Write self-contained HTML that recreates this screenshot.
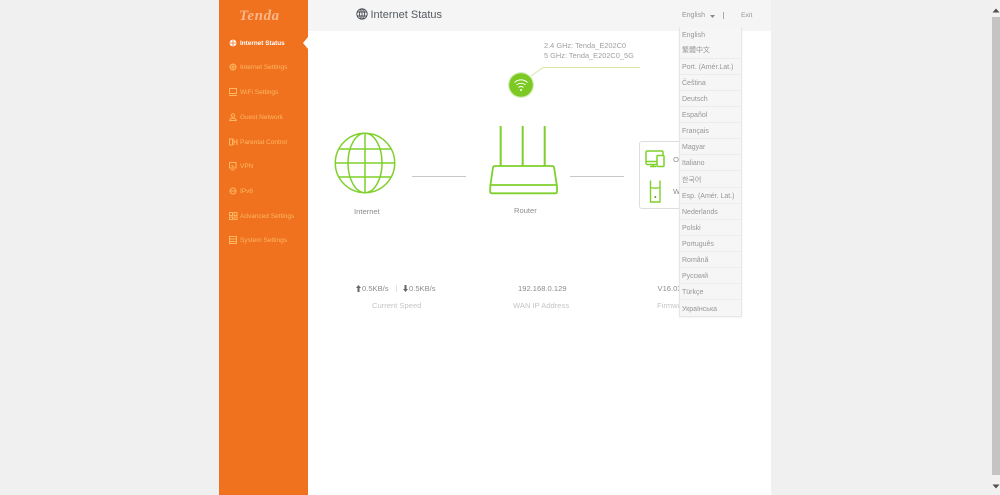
<!DOCTYPE html>
<html lang="en"><head><meta charset="utf-8"><title>Internet Status</title>
<style>
html,body{margin:0;padding:0;width:1000px;height:495px;overflow:hidden;background:#f0f0f0;font-family:"Liberation Sans","Noto Sans CJK SC",sans-serif}
div,span{position:absolute;white-space:nowrap}
svg{position:absolute;overflow:visible}
.side{left:219px;top:0;width:89px;height:495px;background:#f0711e}
.white{left:308px;top:0;width:463px;height:495px;background:#fff}
.head{left:308px;top:0;width:463px;height:31px;background:#f5f5f5}
.m{left:240px;font-size:6.5px;line-height:10px;color:#fdb863}
.g{color:#8c8c8c;font-size:7.6px;line-height:10px}
.l{color:#c4c4c4;font-size:7.6px;line-height:10px}
.menu{left:679px;top:27px;width:61px;height:289px;background:#f6f6f6;border:1px solid #e6e6e6;border-top:0;box-shadow:0 1px 2px rgba(0,0,0,.05)}
.r{left:2px;margin-top:1px;font-size:7px;line-height:10px;color:#969696}
.s{left:0;width:61px;height:1px;background:#ececec}
.ic{stroke:#fdb863;fill:none;stroke-width:1}
.gr{stroke:#7fd02c;fill:none}
</style></head><body>
<div class="white"></div>
<div class="head"></div>
<div class="side"></div>
<div style="left:239px;top:8px;font:italic bold 15px 'Liberation Serif',serif;line-height:16px;color:#f9b78a;letter-spacing:.6px">Tenda</div>

<svg style="left:303px;top:37px" width="6" height="12"><path d="M5 0L0 6l5 6z" fill="#fff"/></svg>
<svg style="left:229px;top:39px" width="8" height="8"><circle cx="4" cy="4" r="3.4" fill="#fff"/><path d="M1 4h6M4 1v6" stroke="#f0711e" stroke-width=".8"/></svg>
<div class="m" style="top:38.5px;color:#fff;font-weight:bold;left:240px;font-size:6.4px">Internet Status</div>

<svg style="left:229px;top:63px" width="8" height="8"><circle class="ic" cx="4" cy="4" r="3"/><path class="ic" d="M4 1v6M1 4h6"/></svg>
<div class="m" style="top:63px">Internet Settings</div>
<svg style="left:229px;top:88px" width="9" height="8"><rect class="ic" x=".5" y=".5" width="7" height="5"/><path class="ic" d="M0 7.5h8"/></svg>
<div class="m" style="top:88px">WiFi Settings</div>
<svg style="left:229px;top:113px" width="8" height="8"><circle class="ic" cx="4" cy="2.5" r="1.7"/><path class="ic" d="M.7 7.5c.5-3 6-3 6.6 0z"/></svg>
<div class="m" style="top:113px">Guest Network</div>
<svg style="left:229px;top:138px" width="9" height="8"><path class="ic" d="M.5 1h3v6h-3zM5 1v6M5 4h3M8 1v6"/></svg>
<div class="m" style="top:137.5px">Parental Control</div>
<svg style="left:229px;top:162px" width="8" height="9"><rect class="ic" x=".5" y=".5" width="6.5" height="5.5"/><path class="ic" d="M2 8h3.5M2.500 3l2 2"/></svg>
<div class="m" style="top:162px">VPN</div>
<svg style="left:229px;top:187px" width="8" height="8"><circle class="ic" cx="4" cy="4" r="3"/><path class="ic" d="M1 4h6"/></svg>
<div class="m" style="top:186.500px">IPv6</div>
<svg style="left:229px;top:212px" width="9" height="8"><path class="ic" d="M.5.500h3v3h-3zM5 .5h3v3H5zM.5 5h3v2.500h-3zM5 5h3v2.500H5z"/></svg>
<div class="m" style="top:211.500px">Advanced Settings</div>
<svg style="left:229px;top:236px" width="9" height="9"><rect class="ic" x=".5" y=".5" width="7" height="7"/><path class="ic" d="M.5 3h7M.5 5.500h7"/></svg>
<div class="m" style="top:236px">System Settings</div>

<svg style="left:356px;top:8px" width="12" height="12" viewBox="0 0 12 12"><g fill="none" stroke="#4a4f55" stroke-width=".9"><circle cx="6" cy="6" r="5.2"/><ellipse cx="6" cy="6" rx="2.500" ry="5.200"/><path d="M6 .8v10.400M1.200 4h9.600M1.200 8h9.600"/></g></svg>
<div style="left:370.500px;top:8px;font-size:11px;line-height:14px;color:#555a60">Internet Status</div>
<div style="left:682px;top:11px;font-size:7px;line-height:10px;color:#969696">English</div>
<svg style="left:710px;top:15px" width="5" height="3"><path d="M0 0h5L2.500 3z" fill="#8a8a8a"/></svg>
<div style="left:723px;top:12px;width:1px;height:7px;background:#aaa"></div>
<div style="left:741px;top:11px;font-size:6.8px;line-height:10px;color:#969696">Exit</div>

<div class="g" style="left:544px;top:40.500px;color:#a0a0a0;font-size:7.4px">2.4 GHz: Tenda_E202C0</div>
<div class="g" style="left:544px;top:51px;color:#a0a0a0;font-size:7.4px">5 GHz: Tenda_E202C0_5G</div>
<svg style="left:528px;top:67px" width="112" height="12"><path d="M3 9L15 .5H112" fill="none" stroke="#d7e6a0" stroke-width="1"/></svg>
<svg style="left:508px;top:72px" width="26" height="26" viewBox="0 0 26 26"><circle cx="13" cy="13" r="13" fill="#d5edb8"/><circle cx="13" cy="13" r="11.800" fill="#7cc924"/><g fill="none" stroke="#fff" stroke-width=".9"><path d="M6.500 10.500c4-3.500 9-3.500 13 0M8.500 13c2.500-2.300 6.500-2.300 9 0M10.500 15.500c1.500-1.200 3.500-1.200 5 0"/></g><circle cx="13" cy="18" r="1" fill="#fff"/></svg>

<svg style="left:334px;top:132px" width="62" height="62" viewBox="0 0 62 62"><g class="gr" stroke-width="1.500"><circle cx="31" cy="31" r="29.700"/><ellipse cx="31" cy="31" rx="17" ry="29.700"/><path d="M31 1.300v59.400M1.300 31h59.400M4.500 17h53M4.500 45h53"/></g></svg>
<div class="g" style="left:354px;top:207px">Internet</div>
<div style="left:412px;top:176px;width:54px;height:1px;background:#c8c8c8"></div>

<svg style="left:489px;top:124px" width="70" height="72" viewBox="0 0 70 72"><g class="gr" stroke-width="1.800"><path d="M11.700 2v40M33.700 2v40M55.700 2v40" stroke-width="2"/><path d="M6 42h57q2 0 2.200 2l2.800 18.500v5q0 1.800-1.800 1.800H3q-1.800 0-1.800-1.800v-5l2.700-18.500q.2-2 2.100-2z"/><path d="M1.700 61h66"/></g></svg>
<div class="g" style="left:514px;top:206px">Router</div>
<div style="left:570px;top:176px;width:54px;height:1px;background:#c8c8c8"></div>

<div style="left:639px;top:141px;width:60px;height:66px;border:1px solid #dedede;border-radius:3px;background:#fff"></div>
<svg style="left:645px;top:150px" width="22" height="18" viewBox="0 0 22 18"><g class="gr" stroke-width="1.500"><path d="M11.500 14.500H2.500Q1 14.500 1 13V2.500Q1 1 2.500 1h14.500Q18 1 18 2.500V5"/><path d="M1 11.500h10.500M5 16.500h6M8 14.500v2"/><rect x="12" y="5.500" width="7" height="11" rx="1"/></g></svg>
<svg style="left:649px;top:180px" width="14" height="23" viewBox="0 0 14 23"><g class="gr" stroke-width="1.400"><path d="M1.500 .5V7.500M11 .5V7.500M1.500 7.500c3 .8 6.500 .8 9.500 0V22H1.500z"/></g><circle cx="6.300" cy="17" r="1" fill="#5a9a1a"/></svg>
<div class="g" style="left:673px;top:155px">On</div>
<div class="g" style="left:673px;top:187px">W</div>

<svg style="left:356px;top:285px" width="5" height="7"><path d="M2.500 0L5 3H3.500v4h-2V3H0z" fill="#666"/></svg>
<div class="g" style="left:362px;top:284px">0.5KB/s</div>
<div style="left:396px;top:285px;width:1px;height:7px;background:#e3e3e3"></div>
<svg style="left:403px;top:285px" width="5" height="7"><path d="M1.500 0h2v4H5L2.500 7 0 4h1.500z" fill="#666"/></svg>
<div class="g" style="left:409px;top:284px">0.5KB/s</div>
<div class="l" style="left:372px;top:300.500px">Current Speed</div>
<div class="g" style="left:518px;top:284px">192.168.0.129</div>
<div class="l" style="left:513px;top:300.500px">WAN IP Address</div>
<div class="g" style="left:657.500px;top:284px">V16.03</div>
<div class="l" style="left:657px;top:300.500px">Firmware</div>

<div class="menu">
<span class="r" style="top:2.500px">English</span>
<span class="r" style="top:18px">繁體中文</span><span class="s" style="top:31px"></span>
<span class="r" style="top:34.500px">Port. (Amér.Lat.)</span><span class="s" style="top:47px"></span>
<span class="r" style="top:50.500px">Čeština</span><span class="s" style="top:63px"></span>
<span class="r" style="top:67px">Deutsch</span><span class="s" style="top:79px"></span>
<span class="r" style="top:83px">Español</span><span class="s" style="top:95px"></span>
<span class="r" style="top:99px">Français</span><span class="s" style="top:111px"></span>
<span class="r" style="top:115px">Magyar</span><span class="s" style="top:127px"></span>
<span class="r" style="top:131px">Italiano</span><span class="s" style="top:143px"></span>
<span class="r" style="top:147.500px">한국어</span><span class="s" style="top:160px"></span>
<span class="r" style="top:163.500px">Esp. (Amér. Lat.)</span><span class="s" style="top:176px"></span>
<span class="r" style="top:180px">Nederlands</span><span class="s" style="top:192px"></span>
<span class="r" style="top:196px">Polski</span><span class="s" style="top:208px"></span>
<span class="r" style="top:212px">Português</span><span class="s" style="top:224px"></span>
<span class="r" style="top:228px">Română</span><span class="s" style="top:240px"></span>
<span class="r" style="top:244px">Русский</span><span class="s" style="top:256px"></span>
<span class="r" style="top:260px">Türkçe</span><span class="s" style="top:272px"></span>
<span class="r" style="top:276.500px">Українська</span>
</div>

<div style="left:992px;top:0;width:8px;height:495px;background:#f1f1f1"></div>
<div style="left:992px;top:17px;width:8px;height:458px;background:#c4c4c4"></div>
<svg style="left:992px;top:8px" width="8" height="5"><path d="M4 .5L7.500 4.500H.5z" fill="#505050"/></svg>
<svg style="left:992px;top:484px" width="8" height="5"><path d="M.5 .5h7L4 4.500z" fill="#505050"/></svg>
</body></html>
